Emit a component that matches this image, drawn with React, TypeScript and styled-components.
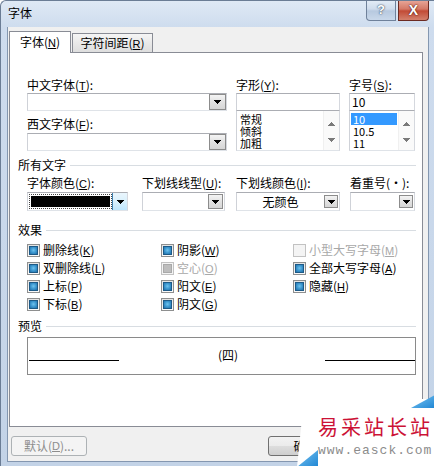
import React from "react";
import styled, { createGlobalStyle, css } from "styled-components";

const GlobalStyle = createGlobalStyle`
  html, body { margin: 0; padding: 0; }
  body {
    width: 434px;
    height: 466px;
    overflow: hidden;
    font-family: "Noto Sans CJK SC", "Liberation Sans", sans-serif;
    font-size: 12px;
    line-height: 14px;
    color: #000;
  }
  * { box-sizing: border-box; }
`;

const Window = styled.div`
  position: relative;
  width: 434px;
  height: 466px;
  display: flex;
  flex-direction: column;
  padding: 0 5px 4px 6px;
  border-left: 1px solid #6b7d95;
  border-top: 1px solid #6b7d95;
  border-top-left-radius: 6px;
  background: linear-gradient(#dfe9f5 0px, #cedcee 26px, #c3d3e7 100%);
  overflow: hidden;
`;

const TitleBar = styled.div`
  height: 26px;
  flex: none;
  display: flex;
  align-items: flex-start;
`;

const Title = styled.div`
  margin: 5px 0 0 1px;
`;

const CaptionButtons = styled.div`
  margin-left: auto;
  margin-top: -1px;
  display: flex;
  gap: 2px;
`;

const CaptionBtn = styled.div<{ $close?: boolean }>`
  width: ${(p) => (p.$close ? 31 : 30)}px;
  height: 21px;
  display: flex;
  align-items: center;
  justify-content: center;
  border: 1px solid ${(p) => (p.$close ? "#6b2a22" : "#6f819a")};
  border-top: none;
  border-radius: 0 0 ${(p) => (p.$close ? "4px 0" : "0 4px")};
  font-family: "Liberation Sans", sans-serif;
  font-weight: bold;
  color: #fff;
  ${(p) =>
    p.$close
      ? css`
          background: linear-gradient(#e9a99b 0%, #d47967 45%, #c24b36 55%, #d3806c 100%);
          font-size: 14px;
          text-shadow: 0 0 2px #5b1a10, 0 0 1px #5b1a10;
        `
      : css`
          background: linear-gradient(#e4edf7 0%, #cfdcec 45%, #b7c9df 55%, #c9d8ea 100%);
          font-size: 13px;
          text-shadow: 0 0 1px #3e4f66, 0 0 2px #3e4f66;
        `}
`;

const Client = styled.div`
  flex: 1;
  display: flex;
  flex-direction: column;
  background: #f0f0f0;
  border: 1px solid #8497b0;
  border-top: none;
  padding: 4px 5px 0 1px;
`;

const TabRow = styled.div`
  height: 21px;
  display: flex;
  align-items: flex-end;
  position: relative;
  z-index: 1;
`;

const Tab = styled.div<{ $active?: boolean }>`
  border: 1px solid #898c95;
  border-bottom: none;
  text-align: center;
  white-space: nowrap;
  ${(p) =>
    p.$active
      ? css`
          width: 62px;
          height: 22px;
          margin-bottom: -1px;
          background: #fff;
          padding-top: 3px;
        `
      : css`
          width: 81px;
          height: 19px;
          margin-left: 1px;
          background: linear-gradient(#f5f5f5, #e9e9e9 50%, #dedede);
          padding-top: 2px;
        `}
`;

const Panel = styled.div`
  height: 375px;
  flex: none;
  background: #fff;
  border: 1px solid #898c95;
  padding: 0 6px 0 17px;
  display: flex;
  flex-direction: column;
`;

const Mn = styled.span`
  text-decoration: underline;
  font-family: "Liberation Sans", sans-serif;
  font-size: 11px;
`;

const Label = styled.div<{ $mt?: number }>`
  height: 14px;
  white-space: nowrap;
  margin-top: ${(p) => p.$mt ?? 0}px;
`;

const TopGrid = styled.div`
  margin-top: 25px;
  display: flex;
`;

const Col = styled.div<{ $w: number; $ml?: number }>`
  width: ${(p) => p.$w}px;
  margin-left: ${(p) => p.$ml ?? 0}px;
  display: flex;
  flex-direction: column;
`;

const Box = styled.div<{ $h: number; $mt?: number }>`
  height: ${(p) => p.$h}px;
  margin-top: ${(p) => p.$mt ?? 0}px;
  border: 1px solid;
  border-color: #abadb3 #d5d8de #dfe3e8 #cfd2d8;
  background: #fff;
  display: flex;
  align-items: center;
`;

const BoxText = styled.div<{ $center?: boolean }>`
  flex: 1;
  padding-left: 2px;
  white-space: nowrap;
  ${(p) => p.$center && css`text-align: center; padding-left: 0;`}
`;

const DropBtn = styled.div<{ $w: number; $h: number; $mr?: number }>`
  width: ${(p) => p.$w}px;
  height: ${(p) => p.$h}px;
  margin-right: ${(p) => p.$mr ?? 0}px;
  border: 1px solid #8c8c8c;
  background: linear-gradient(#f4f4f4, #e2e2e2 50%, #d6d6d6);
  display: flex;
  align-items: center;
  justify-content: center;
  flex: none;
`;

const ListBox = styled.div`
  height: 41px;
  margin-top: -1px;
  border: 1px solid;
  border-color: #abadb3 #d5d8de #dfe3e8 #cfd2d8;
  background: #fff;
  display: flex;
  overflow: hidden;
`;

const Items = styled.div`
  flex: 1;
  padding-top: 2px;
  display: flex;
  flex-direction: column;
`;

const Item = styled.div<{ $sel?: boolean }>`
  height: 12px;
  line-height: 12px;
  font-size: 11px;
  margin: 0 1px;
  padding-left: 2px;
  white-space: nowrap;
  ${(p) => p.$sel && css`background: #3399ff; color: #fff;`}
`;

const ScrollCol = styled.div`
  width: 16px;
  flex: none;
  background: #fafafa;
  border-left: 1px solid #f0f0f0;
  display: flex;
  flex-direction: column;
  align-items: center;
  justify-content: space-between;
  padding: 11px 0 8px;
`;

const GroupHeader = styled.div<{ $mt: number }>`
  margin: ${(p) => p.$mt}px 0 0 -9px;
  height: 14px;
  display: flex;
  align-items: center;
  gap: 4px;
  white-space: nowrap;
  &::after {
    content: "";
    flex: 1;
    height: 1px;
    margin-top: 1px;
    background: #d8dde2;
  }
`;

const FieldRow = styled.div`
  margin-top: 4px;
  display: flex;
`;

const ColorSwatch = styled.div`
  flex: 1;
  align-self: stretch;
  margin: 1px 0 1px 1px;
  border: 1px dotted #444;
  padding: 1px;
  background: #000;
  background-clip: content-box;
`;

const ColorDrop = styled.div`
  width: 15px;
  align-self: stretch;
  border-left: 1px solid #3c7fb1;
  background: linear-gradient(#eaf6fd, #d9f0fc 50%, #bee6fd);
  display: flex;
  align-items: center;
  justify-content: center;
`;

const CheckGrid = styled.div`
  margin-top: 4px;
  display: grid;
  grid-template-columns: 134px 132px 1fr;
  grid-auto-rows: 18px;
`;

const CheckItem = styled.div<{ $disabled?: boolean }>`
  display: flex;
  align-items: center;
  gap: 3px;
  white-space: nowrap;
  color: ${(p) => (p.$disabled ? "#a8a8a8" : "#000")};
`;

const CheckBox = styled.span<{ $state: "mixed" | "off"; $disabled?: boolean }>`
  width: 13px;
  height: 13px;
  flex: none;
  border: 1px solid ${(p) => (p.$disabled ? "#c2c2c2" : "#8e8f8f")};
  background: ${(p) => (p.$disabled ? "#f4f4f4" : "linear-gradient(#e4e4e4, #fafafa)")};
  padding: 1px;
  display: flex;
  &::after {
    content: "";
    flex: 1;
    ${(p) =>
      p.$state === "mixed" &&
      (p.$disabled
        ? css`
            background: #bdbdbd;
            border: 1px solid #a9a9a9;
          `
        : css`
            background: radial-gradient(circle at 50% 45%, #6fc3ee 0%, #3d98d0 50%, #1f6ea8 100%);
            border: 1px solid #1d5a87;
          `)}
  }
`;

const PreviewBox = styled.div`
  margin-top: 4px;
  width: 389px;
  height: 38px;
  border: 1px solid #8a8a8a;
  background: #fff;
  display: flex;
  align-items: flex-start;
`;

const PreviewLine = styled.div<{ $ml?: number }>`
  width: 90px;
  height: 1px;
  margin-top: 22px;
  margin-left: ${(p) => p.$ml ?? 0}px;
  background: #000;
`;

const PreviewText = styled.div`
  flex: 1;
  margin-top: 10px;
  text-align: center;
  padding-left: 12px;
`;

const Footer = styled.div`
  margin-top: 9px;
  padding-left: 2px;
  display: flex;
  justify-content: space-between;
`;

const BtnGroup = styled.div`
  display: flex;
  gap: 6px;
`;

const Button = styled.div<{ $w: number; $disabled?: boolean }>`
  width: ${(p) => p.$w}px;
  height: 20px;
  border-radius: 3px;
  display: flex;
  align-items: center;
  justify-content: center;
  white-space: nowrap;
  ${(p) =>
    p.$disabled
      ? css`
          border: 1px solid #adb2b5;
          background: #f4f4f4;
          color: #8d8d8d;
        `
      : css`
          border: 1px solid #707070;
          background: linear-gradient(#f2f2f2 0%, #ebebeb 50%, #dddddd 50%, #cfcfcf 100%);
        `}
`;

const Watermark = styled.div`
  position: absolute;
  left: 296px;
  top: 394px;
  width: 138px;
  height: 72px;
  z-index: 5;
  padding: 22px 0 0 21px;
  display: flex;
  flex-direction: column;
`;

const WmBg = styled.svg`
  position: absolute;
  left: 0;
  top: 0;
  z-index: -1;
`;

const WmTitle = styled.div`
  font-family: "Noto Sans CJK SC", sans-serif;
  font-size: 20px;
  line-height: 20px;
  letter-spacing: 3px;
  color: #cc1236;
  white-space: nowrap;
`;

const WmUrl = styled.div`
  margin-top: 7px;
  font-family: "Liberation Mono", monospace;
  font-size: 13px;
  line-height: 14px;
  letter-spacing: 1px;
  color: #8c8c8c;
  white-space: nowrap;
`;

const Tri = ({ up, color = "#000" }: { up?: boolean; color?: string }) => (
  <svg width="7" height="4" viewBox="0 0 7 4" shapeRendering="crispEdges">
    <path
      fill={color}
      d={
        up
          ? "M3 0h1v1h1v1h1v1h1v1H0V3h1V2h1V1h1z"
          : "M0 0h7v1H6v1H5v1H4v1H3V3H2V2H1V1H0z"
      }
    />
  </svg>
);

const Combo = ({ h, text, center, btnW, btnH, btnMr }: { h: number; text?: string; center?: boolean; btnW: number; btnH: number; btnMr?: number }) => (
  <Box $h={h} $mt={2}>
    <BoxText $center={center}>{text}</BoxText>
    <DropBtn $w={btnW} $h={btnH} $mr={btnMr}>
      <Tri />
    </DropBtn>
  </Box>
);

const effects: { label: React.ReactNode; state: "mixed" | "off"; disabled?: boolean }[] = [
  { label: <>删除线(<Mn>K</Mn>)</>, state: "mixed" },
  { label: <>阴影(<Mn>W</Mn>)</>, state: "mixed" },
  { label: <>小型大写字母(<Mn>M</Mn>)</>, state: "off", disabled: true },
  { label: <>双删除线(<Mn>L</Mn>)</>, state: "mixed" },
  { label: <>空心(<Mn>O</Mn>)</>, state: "mixed", disabled: true },
  { label: <>全部大写字母(<Mn>A</Mn>)</>, state: "mixed" },
  { label: <>上标(<Mn>P</Mn>)</>, state: "mixed" },
  { label: <>阳文(<Mn>E</Mn>)</>, state: "mixed" },
  { label: <>隐藏(<Mn>H</Mn>)</>, state: "mixed" },
  { label: <>下标(<Mn>B</Mn>)</>, state: "mixed" },
  { label: <>阴文(<Mn>G</Mn>)</>, state: "mixed" },
];

export default function App() {
  return (
    <>
      <GlobalStyle />
      <Window>
        <TitleBar>
          <Title>字体</Title>
          <CaptionButtons>
            <CaptionBtn>?</CaptionBtn>
            <CaptionBtn $close>X</CaptionBtn>
          </CaptionButtons>
        </TitleBar>
        <Client>
          <TabRow>
            <Tab $active>字体(<Mn>N</Mn>)</Tab>
            <Tab>字符间距(<Mn>R</Mn>)</Tab>
          </TabRow>
          <Panel>
            <TopGrid>
              <Col $w={200}>
                <Label>中文字体(<Mn>T</Mn>):</Label>
                <Box $h={18} $mt={1}>
                  <BoxText />
                  <DropBtn $w={17} $h={16}>
                    <Tri />
                  </DropBtn>
                </Box>
                <Label $mt={6}>西文字体(<Mn>F</Mn>):</Label>
                <Box $h={18} $mt={2}>
                  <BoxText />
                  <DropBtn $w={17} $h={16}>
                    <Tri />
                  </DropBtn>
                </Box>
              </Col>
              <Col $w={104} $ml={9}>
                <Label>字形(<Mn>Y</Mn>):</Label>
                <Box $h={18} $mt={1} />
                <ListBox>
                  <Items>
                    <Item>常规</Item>
                    <Item>倾斜</Item>
                    <Item>加粗</Item>
                  </Items>
                  <ScrollCol>
                    <Tri up color="#7a7a7a" />
                    <Tri color="#7a7a7a" />
                  </ScrollCol>
                </ListBox>
              </Col>
              <Col $w={66} $ml={9}>
                <Label>字号(<Mn>S</Mn>):</Label>
                <Box $h={18} $mt={1}>
                  <BoxText>10</BoxText>
                </Box>
                <ListBox>
                  <Items>
                    <Item $sel>10</Item>
                    <Item>10.5</Item>
                    <Item>11</Item>
                  </Items>
                  <ScrollCol>
                    <Tri up color="#7a7a7a" />
                    <Tri color="#7a7a7a" />
                  </ScrollCol>
                </ListBox>
              </Col>
            </TopGrid>

            <GroupHeader $mt={7}>所有文字</GroupHeader>
            <FieldRow>
              <Col $w={101}>
                <Label>字体颜色(<Mn>C</Mn>):</Label>
                <Box $h={19} $mt={2}>
                  <ColorSwatch />
                  <ColorDrop>
                    <Tri />
                  </ColorDrop>
                </Box>
              </Col>
              <Col $w={83} $ml={14}>
                <Label>下划线线型(<Mn>U</Mn>):</Label>
                <Combo h={19} btnW={15} btnH={15} btnMr={1} />
              </Col>
              <Col $w={104} $ml={11}>
                <Label>下划线颜色(<Mn>I</Mn>):</Label>
                <Combo h={19} text="无颜色" center btnW={14} btnH={13} btnMr={1} />
              </Col>
              <Col $w={65} $ml={10}>
                <Label>着重号(·):</Label>
                <Combo h={19} btnW={14} btnH={13} btnMr={1} />
              </Col>
            </FieldRow>

            <GroupHeader $mt={12}>效果</GroupHeader>
            <CheckGrid>
              {effects.map((e, i) => (
                <CheckItem key={i} $disabled={e.disabled}>
                  <CheckBox $state={e.state} $disabled={e.disabled} />
                  <span>{e.label}</span>
                </CheckItem>
              ))}
            </CheckGrid>

            <GroupHeader $mt={6}>预览</GroupHeader>
            <PreviewBox>
              <PreviewLine $ml={1} />
              <PreviewText>(四)</PreviewText>
              <PreviewLine />
            </PreviewBox>
          </Panel>
          <Footer>
            <Button $w={76} $disabled>
              默认(<Mn>D</Mn>)...
            </Button>
            <BtnGroup>
              <Button $w={75}>确定</Button>
              <Button $w={74} />
            </BtnGroup>
          </Footer>
        </Client>
        <Watermark>
          <WmBg width="138" height="72" viewBox="0 0 138 72">
            <defs>
              <linearGradient id="wmBlue" x1="0" y1="0" x2="1" y2="1">
                <stop offset="0" stopColor="#7cc6f2" />
                <stop offset="1" stopColor="#1f86d4" />
              </linearGradient>
            </defs>
            <polygon points="7,4 138,4 138,72 0,72" fill="#fff" />
            <polygon points="114,13 138,0 138,13" fill="url(#wmBlue)" />
            <polygon points="0,72 21,55 21,72" fill="url(#wmBlue)" />
          </WmBg>
          <WmTitle>易采站长站</WmTitle>
          <WmUrl>www.easck.com</WmUrl>
        </Watermark>
      </Window>
    </>
  );
}
